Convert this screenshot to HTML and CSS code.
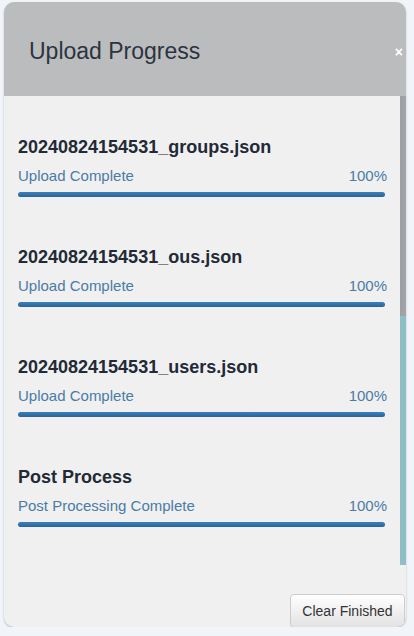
FILE: index.html
```html
<!DOCTYPE html>
<html>
<head>
<meta charset="utf-8">
<link rel="stylesheet" href="styles.css">
</head>
<body>
<div class="modal">
  <div class="modal-header">
    <h1 class="modal-title">Upload Progress</h1>
    <span class="close">×</span>
  </div>
  <div class="modal-body">
    <div class="list">
      <div class="item">
        <div class="item-title">20240824154531_groups.json</div>
        <div class="status"><span>Upload Complete</span><span>100%</span></div>
        <div class="bar"><div class="fill" style="width:100%"></div></div>
      </div>
      <div class="item">
        <div class="item-title">20240824154531_ous.json</div>
        <div class="status"><span>Upload Complete</span><span>100%</span></div>
        <div class="bar"><div class="fill" style="width:100%"></div></div>
      </div>
      <div class="item">
        <div class="item-title">20240824154531_users.json</div>
        <div class="status"><span>Upload Complete</span><span>100%</span></div>
        <div class="bar"><div class="fill" style="width:100%"></div></div>
      </div>
      <div class="item">
        <div class="item-title">Post Process</div>
        <div class="status"><span>Post Processing Complete</span><span>100%</span></div>
        <div class="bar"><div class="fill" style="width:100%"></div></div>
      </div>
    </div>
    <div class="scrollbar">
      <div class="thumb"></div>
      <div class="track"></div>
    </div>
  </div>
  <div class="modal-footer">
    <button class="btn">Clear Finished</button>
  </div>
</div>
</body>
</html>
```

FILE: styles.css
```css
html, body {
  margin: 0;
  padding: 0;
  background: #f1f4f9;
  font-family: "Liberation Sans", Arial, sans-serif;
}
body {
  padding: 2px 8px 0 4px;
}
.modal {
  width: 402px;
  height: 625px;
  background: #f0f0f0;
  border-radius: 10px;
  display: flex;
  flex-direction: column;
  overflow: hidden;
  box-shadow: 0 1px 2px rgba(0,0,0,0.25);
}
.modal-header {
  height: 94px;
  flex: none;
  box-sizing: border-box;
  background: #bbbcbe;
  display: flex;
  align-items: center;
  justify-content: space-between;
  padding: 3px 3px 0 25px;
}
.modal-title {
  margin: 0;
  font-weight: normal;
  font-size: 23px;
  color: #2b3440;
  line-height: 28px;
}
.close {
  color: #ffffff;
  font-weight: bold;
  font-size: 14px;
  line-height: 14px;
  margin-top: 3px;
}
.modal-body {
  height: 469px;
  flex: none;
  display: flex;
}
.list {
  flex: 1;
  padding: 40px 15px 0 14px;
  overflow: hidden;
}
.item {
  margin-bottom: 49px;
}
.item-title {
  font-size: 18px;
  font-weight: bold;
  line-height: 22px;
  color: #222a36;
}
.status {
  margin-top: 9px;
  margin-right: -2px;
  display: flex;
  justify-content: space-between;
  font-size: 15px;
  line-height: 18px;
  color: #4a7ca6;
}
.bar {
  margin-top: 7px;
  height: 5px;
  border-radius: 3px;
  background: #e6e6e6;
  overflow: hidden;
}
.fill {
  height: 100%;
  background: linear-gradient(#3b80bc, #2b6497);
}
.scrollbar {
  width: 6px;
  flex: none;
  display: flex;
  flex-direction: column;
}
.thumb {
  height: 220px;
  background: linear-gradient(to right, #9d9ea2, #a4a5a9);
}
.track {
  flex: 1;
  background: #8fbfc4;
}
.modal-footer {
  flex: 1;
  display: flex;
  justify-content: flex-end;
  align-items: flex-end;
  padding-right: 1px;
}
.btn {
  font-family: "Liberation Sans", Arial, sans-serif;
  font-size: 14px;
  color: #333333;
  height: 34px;
  width: 115px;
  padding: 0;
  border: 1px solid #cccccc;
  border-radius: 4px;
  background: linear-gradient(#ffffff, #e2e2e2);
  margin-bottom: -1px;
}
```
